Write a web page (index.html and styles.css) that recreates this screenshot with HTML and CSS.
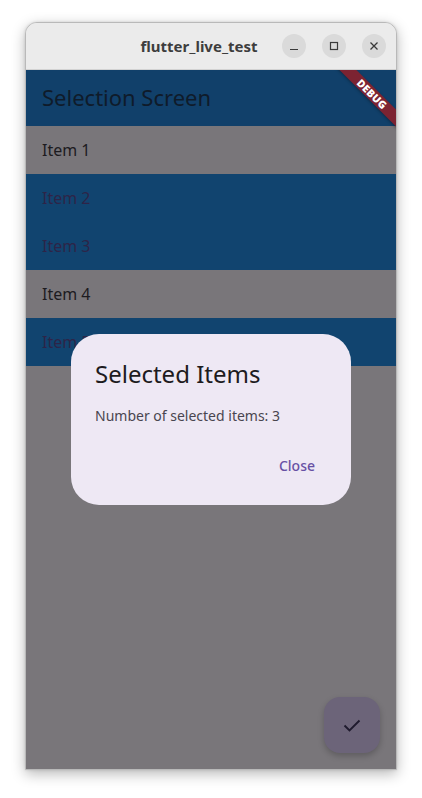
FILE: index.html
```html
<!DOCTYPE html>
<html>
<head>
<meta charset="utf-8">
<link rel="stylesheet" href="styles.css">
</head>
<body>
<div class="window">
  <div class="titlebar">
    <div class="title">flutter_live_test</div>
    <div class="controls">
      <div class="ctl"><svg width="24" height="24" viewBox="0 0 24 24"><path d="M8 15.5h8" stroke="#3a3a3a" stroke-width="1.2"/></svg></div>
      <div class="ctl"><svg width="24" height="24" viewBox="0 0 24 24"><rect x="8.5" y="8.5" width="7" height="7" fill="none" stroke="#3a3a3a" stroke-width="1.2"/></svg></div>
      <div class="ctl"><svg width="24" height="24" viewBox="0 0 24 24"><path d="M8.5 8.5l7 7M15.5 8.5l-7 7" stroke="#3a3a3a" stroke-width="1.3"/></svg></div>
    </div>
  </div>
  <div class="content">
    <div class="appbar">Selection Screen</div>
    <div class="list">
      <div class="item">Item 1</div>
      <div class="item sel">Item 2</div>
      <div class="item sel">Item 3</div>
      <div class="item">Item 4</div>
      <div class="item sel">Item 5</div>
    </div>
    <div class="banner">DEBUG</div>
    <div class="fab"><svg width="24" height="24" viewBox="0 0 24 24"><path d="M4.5 12.5l5 5 10-10" fill="none" stroke="#1f1a2e" stroke-width="1.9"/></svg></div>
    <div class="overlay">
      <div class="dialog">
        <div class="d-title">Selected Items</div>
        <div class="d-body">Number of selected items: 3</div>
        <div class="d-actions"><span class="btn">Close</span></div>
      </div>
    </div>
  </div>
</div>
</body>
</html>
```

FILE: styles.css
```css
* { box-sizing: border-box; }
html, body { margin: 0; padding: 0; background: #ffffff; }
body { font-family: "Noto Sans", "DejaVu Sans", sans-serif; width: 422px; height: 798px; overflow: hidden; }

.window {
  margin: 22px 0 0 25px;
  width: 372px;
  height: 748px;
  border: 1px solid #b9b9b9;
  border-radius: 12px 12px 0 0;
  overflow: hidden;
  box-shadow: 0 4px 14px rgba(0,0,0,0.28), 0 0 3px rgba(0,0,0,0.12);
  display: flex;
  flex-direction: column;
  background: #ebebeb;
}
.titlebar {
  height: 47px;
  flex: none;
  background: #ebebeb;
  border-bottom: 1px solid #d2d2d2;
  position: relative;
  display: flex;
  align-items: center;
  justify-content: flex-end;
  padding-right: 10px;
}
.title {
  position: absolute;
  left: 0; right: 0;
  top: 0; bottom: 0;
  display: flex;
  align-items: center;
  justify-content: center;
  padding-right: 24px;
  font-weight: 700;
  font-size: 15px;
  color: #3d3d3d;
}
.controls { display: flex; gap: 16px; position: relative; }
.ctl {
  width: 24px; height: 24px;
  border-radius: 50%;
  background: #dadada;
}
.ctl svg { display: block; }

.content {
  flex: 1;
  position: relative;
  overflow: hidden;
  background: #79767a;
}
.appbar {
  height: 56px;
  background: #11406a;
  color: #0f1b2a;
  font-size: 22px;
  display: flex;
  align-items: center;
  padding-left: 16px;
  padding-bottom: 3px;
}
.item {
  height: 48px;
  display: flex;
  align-items: center;
  padding-left: 16px;
  font-size: 16px;
  color: #1d1b1f;
}
.item.sel { background: #11446f; color: #2d2448; }

.banner {
  position: absolute;
  top: 18px;
  right: -26px;
  width: 100px;
  height: 12px;
  transform: rotate(45deg);
  background: #7c2332;
  color: #ffffff;
  font-size: 10.5px;
  font-weight: 900;
  letter-spacing: 0.2px;
  line-height: 12px;
  text-align: center;
  box-shadow: 0 1px 3px rgba(0,0,0,0.3);
}

.fab {
  position: absolute;
  right: 16px;
  bottom: 16px;
  width: 56px;
  height: 56px;
  border-radius: 16px;
  background: #6c6479;
  box-shadow: 0 3px 6px rgba(0,0,0,0.22);
  display: flex;
  align-items: center;
  justify-content: center;
}

.overlay {
  position: absolute;
  inset: 0;
  display: flex;
  align-items: center;
  justify-content: center;
}
.dialog {
  width: 280px;
  height: 171px;
  background: #eee8f4;
  border-radius: 28px;
  padding: 24px 24px 0 24px;
  display: flex;
  flex-direction: column;
}
.d-title {
  font-size: 24px;
  line-height: 32px;
  color: #1d1b20;
}
.d-body {
  margin-top: 16px;
  font-size: 14px;
  line-height: 20px;
  color: #49454f;
}
.d-actions {
  margin-top: 19px;
  display: flex;
  justify-content: flex-end;
}
.btn {
  height: 40px;
  padding: 0 12px;
  display: flex;
  align-items: center;
  font-size: 14px;
  font-weight: 500;
  color: #6750a4;
}
```
